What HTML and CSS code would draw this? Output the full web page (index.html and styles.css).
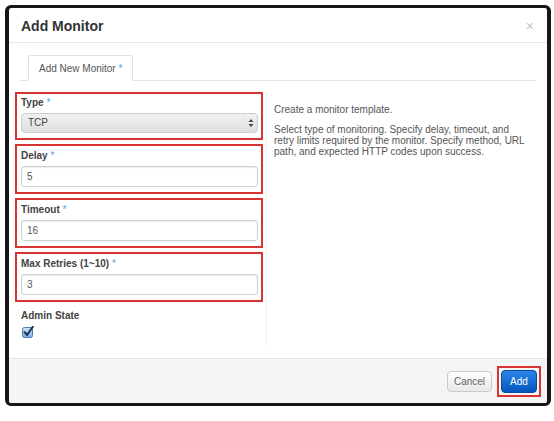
FILE: index.html
```html
<!DOCTYPE html>
<html>
<head>
<meta charset="utf-8">
<link rel="stylesheet" href="styles.css">
</head>
<body>
<div class="modal">
  <div class="header">
    <h4 class="title">Add Monitor</h4>
    <span class="close">×</span>
  </div>
  <div class="body">
    <ul class="tabs">
      <li class="tab">Add New Monitor <span class="req">*</span></li>
    </ul>
    <div class="row">
      <div class="left">
        <div class="group group-type">
          <label class="lbl">Type <span class="req">*</span></label>
          <div class="select">TCP<span class="arrows"><svg width="8" height="10" viewBox="0 0 8 10"><path d="M4 1 L6.5 4 L1.5 4 Z M4 9 L6.5 6 L1.5 6 Z" fill="#444"/></svg></span></div>
        </div>
        <div class="group">
          <label class="lbl">Delay <span class="req">*</span></label>
          <div class="input">5</div>
        </div>
        <div class="group">
          <label class="lbl">Timeout <span class="req">*</span></label>
          <div class="input">16</div>
        </div>
        <div class="group">
          <label class="lbl">Max Retries (1~10) <span class="req">*</span></label>
          <div class="input">3</div>
        </div>
        <div class="admin">
          <label class="lbl">Admin State</label>
          <span class="check"><svg width="13" height="12" viewBox="0 0 13 12"><defs><linearGradient id="cg" x1="0" y1="0" x2="0" y2="1"><stop offset="0" stop-color="#cfe2f7"/><stop offset="1" stop-color="#7eaee6"/></linearGradient></defs><rect x="0.5" y="1.5" width="10" height="10" rx="2" fill="url(#cg)" stroke="#4a78b8"/><path d="M2.6 6.2 L5 9 L10.8 0.8" fill="none" stroke="#1c2f55" stroke-width="2" stroke-linecap="round" stroke-linejoin="round"/></svg></span>
        </div>
      </div>
      <div class="right">
        <p>Create a monitor template.</p>
        <p>Select type of monitoring. Specify delay, timeout, and retry limits required by the monitor. Specify method, URL path, and expected HTTP codes upon success.</p>
      </div>
    </div>
  </div>
  <div class="footer">
    <button class="btn cancel">Cancel</button>
    <span class="hl"><button class="btn add">Add</button></span>
  </div>
</div>
</body>
</html>
```

FILE: styles.css
```css
body {
  margin: 0;
  background: #fff;
  font-family: "Liberation Sans", Arial, Helvetica, sans-serif;
}
.modal {
  margin: 5px 0 0 5px;
  width: 538px;
  border: 4px solid #161616;
  border-top-width: 3px;
  border-bottom-width: 3px;
  border-radius: 6px;
  background: #fff;
  overflow: hidden;
}
.header {
  border-bottom: 1px solid #e8e8e8;
  display: flex;
  align-items: center;
  justify-content: space-between;
  padding: 2px 13px 0 12px;
  box-sizing: border-box;
  height: 35px;
}
.title {
  margin: 0;
  font-size: 14px;
  font-weight: bold;
  color: #333;
}
.close {
  font-size: 14px;
  color: #c4c4c4;
  line-height: 14px;
}
.body {
  padding: 12px 6px 12px;
}
.tabs {
  margin: 0 5px;
  padding: 0 0 0 8px;
  list-style: none;
  display: flex;
  border-bottom: 1px solid #e2e2e2;
}
.tab {
  height: 24px;
  line-height: 25px;
  padding: 0 10px;
  border: 1px solid #e0e0e0;
  border-bottom-color: transparent;
  border-radius: 3px 3px 0 0;
  margin-bottom: -1px;
  background: #fff;
  font-size: 10px;
  color: #555;
}
.req {
  color: #5aa0d8;
  font-weight: normal;
}
.row {
  display: flex;
  margin-top: 11px;
}
.left {
  width: 248px;
  padding-right: 3px;
  padding-bottom: 8px;
  border-right: 1px solid #eee;
}
.group {
  border: 2px solid #d93434;
  padding: 3px 3px 5px 4px;
  margin-bottom: 4px;
}
.group-type {
  padding-top: 2px;
}
.lbl {
  display: block;
  font-size: 10px;
  font-weight: bold;
  line-height: 14px;
  color: #444;
  margin-bottom: 3px;
}
.input {
  height: 21px;
  box-sizing: border-box;
  border: 1px solid #cfcfcf;
  border-radius: 3px;
  font-size: 10px;
  line-height: 19px;
  padding-left: 5px;
  color: #555;
  box-shadow: inset 0 1px 1px rgba(0, 0, 0, 0.08);
}
.select {
  height: 20px;
  box-sizing: border-box;
  border: 1px solid #cdcdcd;
  border-radius: 4px;
  background: linear-gradient(#f2f2f2, #dedede);
  font-size: 10px;
  line-height: 18px;
  padding-left: 6px;
  color: #444;
  display: flex;
  justify-content: space-between;
}
.arrows {
  width: 13px;
  display: flex;
  align-items: center;
  justify-content: center;
  border-left: 1px solid #e4e4e4;
}
.admin {
  padding: 3px 0 0 6px;
}
.admin .lbl {
  margin-bottom: 4px;
}
.check {
  display: block;
  height: 12px;
  margin-left: 1px;
  margin-top: -1px;
}
.check svg {
  display: block;
}
.right {
  flex: 1;
  padding: 12px 13px 0 7px;
  font-size: 10px;
  color: #555;
  line-height: 11px;
}
.right p {
  margin: 0 0 9px;
}
.footer {
  border-top: 1px solid #e5e5e5;
  background: #f5f5f5;
  padding: 7px 6px 6px;
  display: flex;
  justify-content: flex-end;
  align-items: center;
}
.btn {
  font-family: "Liberation Sans", Arial, Helvetica, sans-serif;
  font-size: 10px;
  padding: 0;
  box-sizing: border-box;
}
.cancel {
  width: 45px;
  height: 21px;
  margin-right: 5px;
  border: 1px solid #cacaca;
  border-radius: 4px;
  background: linear-gradient(#ffffff, #e8e8e8);
  color: #666;
}
.hl {
  border: 2px solid #d93434;
  padding: 2px;
  display: flex;
}
.add {
  width: 36px;
  height: 23px;
  border: 1px solid #0a4b9e;
  border-radius: 4px;
  background: linear-gradient(#2a86e8, #0656bd);
  color: #fff;
}
```
